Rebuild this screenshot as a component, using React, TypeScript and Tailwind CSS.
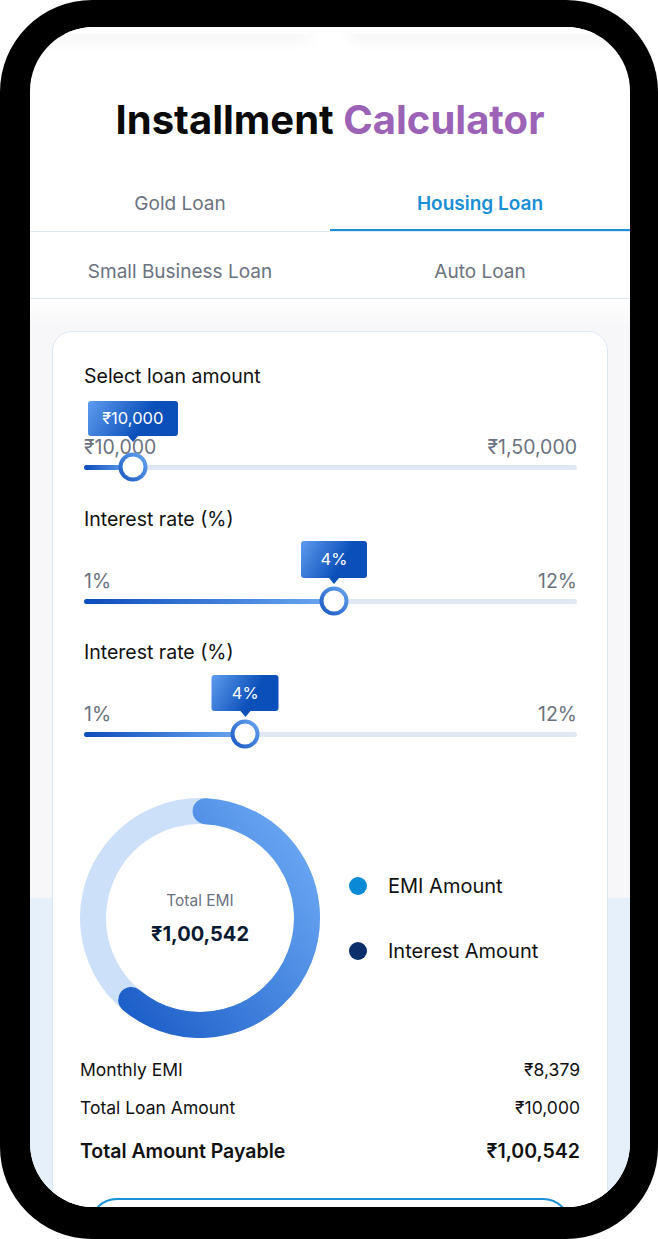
import React from "react";

type SliderProps = {
  label: string;
  min: string;
  max: string;
  pct: number;
  tip: string;
  gapClass: string;
  tipBoxClass: string;
  tipBottom: number;
};

function Slider({ label, min, max, pct, tip, gapClass, tipBoxClass, tipBottom }: SliderProps) {
  return (
    <div>
      <div className="text-[19.5px] leading-6 text-[#111111]">{label}</div>
      <div className={`relative ${gapClass}`}>
        <div className="flex justify-between text-[19.5px] leading-6 text-[#6b7280]">
          <span>{min}</span>
          <span>{max}</span>
        </div>
        <div className="relative h-4 flex items-center">
          <div className="relative w-full h-[5px] rounded-full bg-[#e0e8f5]">
            <div
              className="h-full rounded-full bg-[linear-gradient(to_right,#0c4cbc,#6ea8f2)]"
              style={{ width: `${pct}%` }}
            />
          </div>
          <div
            className="absolute top-1/2 w-[29px] h-[29px] -translate-x-1/2 -translate-y-1/2 rounded-full bg-[linear-gradient(45deg,#1753c2,#6aa8f3)] p-[4px]"
            style={{ left: `${pct}%` }}
          >
            <div className="w-full h-full rounded-full bg-white" />
          </div>
        </div>
        <div
          className="absolute -translate-x-1/2 flex flex-col items-center"
          style={{ left: `${pct}%`, bottom: tipBottom }}
        >
          <div
            className={`rounded-[3px] bg-[linear-gradient(120deg,#5e9cee,#0b4fba_62%)] text-white text-[16.5px] flex items-center justify-center ${tipBoxClass}`}
          >
            {tip}
          </div>
          <div className="w-0 h-0 border-x-[5px] border-x-transparent border-t-[6px] border-t-[#0c50ba]" />
        </div>
      </div>
    </div>
  );
}

function Donut() {
  return (
    <svg width="240" height="240" viewBox="0 0 240 240" className="shrink-0">
      <defs>
        <linearGradient id="arcg" x1="40" y1="210" x2="230" y2="70" gradientUnits="userSpaceOnUse">
          <stop offset="0" stopColor="#1c5ec8" />
          <stop offset="1" stopColor="#66a3f1" />
        </linearGradient>
      </defs>
      <circle cx="120" cy="120" r="107" fill="none" stroke="#cde0fa" strokeWidth="26" />
      <path
        d="M125.6 13.15 A107 107 0 1 1 51.2 201.96"
        fill="none"
        stroke="url(#arcg)"
        strokeWidth="26"
        strokeLinecap="round"
      />
    </svg>
  );
}

export default function App() {
  return (
    <div className="w-[658px] h-[1239px] bg-white font-['Inter','Noto_Sans',sans-serif]">
      <div className="w-full h-full bg-black rounded-[92px] pt-[27px] pl-[30px] pr-[28px] pb-[32px]">
        <div className="w-full h-full bg-white rounded-[64px] overflow-hidden flex flex-col">
          {/* cut-off cards of the previous section */}
          <div className="flex justify-center gap-[34px] h-[7px] shrink-0">
            <div className="w-[280px] h-full bg-white rounded-b-[14px] shadow-[0_6px_14px_rgba(0,0,0,0.07)]" />
            <div className="w-[280px] h-full bg-white rounded-b-[14px] shadow-[0_6px_14px_rgba(0,0,0,0.07)]" />
          </div>

          <h1 className="mt-[62px] text-center text-[40px] leading-[48px] font-bold text-[#0a0a0a]">
            Installment <span className="text-[#9c62b6]">Calculator</span>
          </h1>

          <div className="mt-[20px] grid grid-cols-2 border-b border-[#dfe9f6] text-[19px] leading-5 text-center">
            <div className="pt-[30px] pb-[17px] text-[#6b7280]">Gold Loan</div>
            <div className="pt-[30px] pb-[17px] text-[#1a8ed6] font-semibold shadow-[inset_0_-2px_0_#1a8ed6]">
              Housing Loan
            </div>
          </div>
          <div className="grid grid-cols-2 border-b border-[#dfe9f6] text-[19px] leading-5 text-center text-[#6b7280]">
            <div className="pt-[30px] pb-[16px]">Small Business Loan</div>
            <div className="pt-[30px] pb-[16px]">Auto Loan</div>
          </div>

          <div className="flex-1 px-[22px] pt-[32px] bg-[linear-gradient(to_bottom,#ffffff_0px,#f7f7f9_28px,#f7f7f9_599px,#e5f0fa_599px)]">
            <div className="bg-white border border-[#dde7f5] rounded-[20px] pl-[31px] pr-[30px] pt-8 pb-10">
              <Slider
                label="Select loan amount"
                min="₹10,000"
                max="₹1,50,000"
                pct={9.9}
                tip="₹10,000"
                gapClass="mt-[47px]"
                tipBoxClass="w-[90px] h-[35px]"
                tipBottom={33}
              />
              <div className="mt-[32px]">
                <Slider
                  label="Interest rate (%)"
                  min="1%"
                  max="12%"
                  pct={50.7}
                  tip="4%"
                  gapClass="mt-[38px]"
                  tipBoxClass="w-[66px] h-[37px]"
                  tipBottom={25}
                />
              </div>
              <div className="mt-[31px]">
                <Slider
                  label="Interest rate (%)"
                  min="1%"
                  max="12%"
                  pct={32.7}
                  tip="4%"
                  gapClass="mt-[38px]"
                  tipBoxClass="w-[67px] h-[36px]"
                  tipBottom={25}
                />
              </div>

              <div className="-ml-[4px] -mr-[3px] mt-[56px]">
                <div className="flex items-center">
                  <div className="relative w-[240px] h-[240px]">
                    <Donut />
                    <div className="absolute inset-0 flex flex-col items-center justify-center">
                      <div className="text-[15.5px] leading-5 text-[#6b7280]">Total EMI</div>
                      <div className="mt-[11px] text-[20px] leading-6 font-bold text-[#0b1a33]">₹1,00,542</div>
                    </div>
                  </div>
                  <div className="ml-[29px] flex flex-col gap-[41px]">
                    <div className="flex items-center gap-[21px]">
                      <span className="w-[18px] h-[18px] rounded-full bg-[#0a8ad6]" />
                      <span className="text-[20px] leading-6 text-[#111111]">EMI Amount</span>
                    </div>
                    <div className="flex items-center gap-[21px]">
                      <span className="w-[18px] h-[18px] rounded-full bg-[#0a2f6b]" />
                      <span className="text-[20px] leading-6 text-[#111111]">Interest Amount</span>
                    </div>
                  </div>
                </div>

                <div className="mt-[20px] flex flex-col text-[17.5px] leading-6 text-[#111111]">
                  <div className="flex justify-between">
                    <span>Monthly EMI</span>
                    <span>₹8,379</span>
                  </div>
                  <div className="mt-[14px] flex justify-between">
                    <span>Total Loan Amount</span>
                    <span>₹10,000</span>
                  </div>
                  <div className="mt-[18px] flex justify-between text-[19.5px] leading-[26px] font-semibold">
                    <span>Total Amount Payable</span>
                    <span>₹1,00,542</span>
                  </div>
                </div>

                <div className="mt-[34px] mx-[9px] h-[56px] rounded-full border-2 border-[#1a90d9]" />
              </div>
            </div>
          </div>
        </div>
      </div>
    </div>
  );
}
